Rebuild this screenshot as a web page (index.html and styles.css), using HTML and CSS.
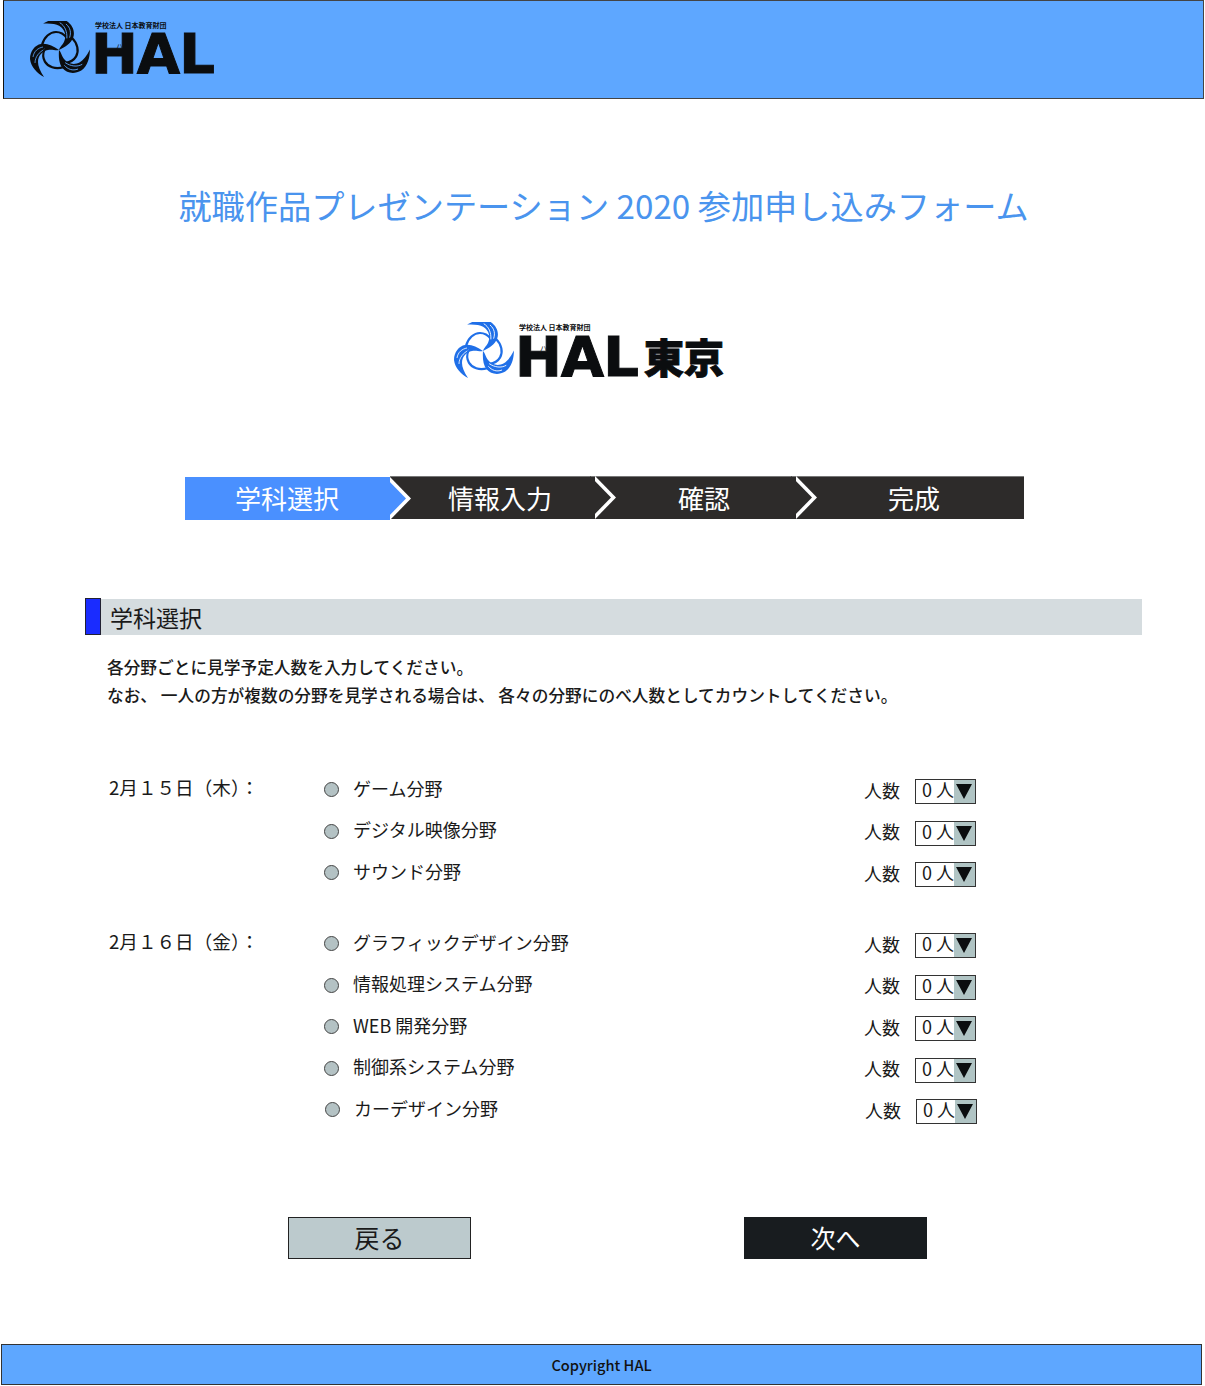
FILE: index.html
```html
<!DOCTYPE html>
<html lang="ja">
<head>
  <meta charset="UTF-8">
  <meta name="viewport" content="width=device-width, initial-scale=1.0">
  <title>就職作品プレゼンテーション 2020 参加申し込みフォーム</title>
  <link rel="stylesheet" href="styles.css">
</head>
<body>
  <svg class="defs" width="0" height="0">
    <symbol id="mark" viewBox="0 0 60 60">
      <g id="blade">
        <path d="M29 29 C23 25 17 22 11 23 C5 24 0 30 0 38 C1 46 7 52 14 56 C10 50 8 45 8 41 C8 35 12 30 18 29 C22 28 26 30 29 29 Z"/>
        <path class="arc" d="M12 24 C14 16 20 11 26 11 C30 11 34 13 37 17"/>
        <path class="cut" d="M3 36 C4 30 8 27 13 26 M5 42 C5 36 9 31 15 28"/>
      </g>
      <use href="#blade" transform="rotate(120 29 29)"/>
      <use href="#blade" transform="rotate(240 29 29)"/>
    </symbol>
  </svg>

  <header class="top-bar">
    <div class="logo">
      <svg class="logo-mark"><use href="#mark"/></svg>
      <div class="logo-type">
        <span class="logo-small">学校法人 日本教育財団</span>
        <span class="logo-name">HAL<span class="kana kana-ha">ハ</span><span class="kana kana-ru">ル</span></span>
      </div>
    </div>
  </header>

  <h1 class="page-title">就職作品プレゼンテーション 2020 参加申し込みフォーム</h1>

  <div class="logo tokyo-logo">
    <svg class="logo-mark blue"><use href="#mark"/></svg>
    <div class="logo-type">
      <span class="logo-small">学校法人 日本教育財団</span>
      <span class="logo-name">HAL<span class="kana kana-ha">ハ</span><span class="kana kana-ru">ル</span><span class="logo-city">東京</span></span>
    </div>
  </div>

  <ol class="steps">
    <li class="step active">学科選択</li>
    <li class="step">情報入力</li>
    <li class="step">確認</li>
    <li class="step">完成</li>
  </ol>

  <h2 class="section-title">学科選択</h2>
  <p class="intro">各分野ごとに見学予定人数を入力してください。<br>なお、 一人の方が複数の分野を見学される場合は、 各々の分野にのべ人数としてカウントしてください。</p>

  <section class="day">
    <div class="day-label">2月１５日（木）：</div>
    <div class="day-rows">
      <div class="row"><span class="radio"></span><span class="name">ゲーム分野</span><span class="count-label">人数</span><span class="picker"><span class="picker-value">0 人</span><span class="picker-arrow"></span></span></div>
      <div class="row"><span class="radio"></span><span class="name">デジタル映像分野</span><span class="count-label">人数</span><span class="picker"><span class="picker-value">0 人</span><span class="picker-arrow"></span></span></div>
      <div class="row"><span class="radio"></span><span class="name">サウンド分野</span><span class="count-label">人数</span><span class="picker"><span class="picker-value">0 人</span><span class="picker-arrow"></span></span></div>
    </div>
  </section>

  <section class="day">
    <div class="day-label">2月１６日（金）：</div>
    <div class="day-rows">
      <div class="row"><span class="radio"></span><span class="name">グラフィックデザイン分野</span><span class="count-label">人数</span><span class="picker"><span class="picker-value">0 人</span><span class="picker-arrow"></span></span></div>
      <div class="row"><span class="radio"></span><span class="name">情報処理システム分野</span><span class="count-label">人数</span><span class="picker"><span class="picker-value">0 人</span><span class="picker-arrow"></span></span></div>
      <div class="row"><span class="radio"></span><span class="name">WEB 開発分野</span><span class="count-label">人数</span><span class="picker"><span class="picker-value">0 人</span><span class="picker-arrow"></span></span></div>
      <div class="row"><span class="radio"></span><span class="name">制御系システム分野</span><span class="count-label">人数</span><span class="picker"><span class="picker-value">0 人</span><span class="picker-arrow"></span></span></div>
      <div class="row last"><span class="radio"></span><span class="name">カーデザイン分野</span><span class="count-label">人数</span><span class="picker"><span class="picker-value">0 人</span><span class="picker-arrow"></span></span></div>
    </div>
  </section>

  <div class="buttons">
    <button class="btn back">戻る</button>
    <button class="btn next">次へ</button>
  </div>

  <footer class="bottom-bar">Copyright HAL</footer>
</body>
</html>
```

FILE: styles.css
```css
* {
  box-sizing: border-box;
}

body {
  margin: 0;
  height: 1386px;
  overflow: hidden;
  background: #fff;
  color: #1a1a1a;
  font-family: "Noto Sans CJK JP", "Noto Sans", sans-serif;
}

.defs {
  display: block;
  height: 0;
}

.top-bar {
  height: 99px;
  margin-left: 3px;
  margin-right: 1px;
  padding: 20px 0 0 26px;
  background: #5ea7ff;
  border: 1px solid #444;
  border-left-color: #111;
  --cut: #5ea7ff;
}

.logo {
  display: flex;
  align-items: flex-start;
  gap: 5px;
}

.logo-mark {
  flex: none;
  width: 60px;
  height: 60px;
  color: #0b0d0f;
  fill: currentColor;
}

.logo-mark.blue {
  color: #1f6fe8;
  --cut: #fff;
}

.arc {
  fill: none;
  stroke: currentColor;
  stroke-width: 2.2;
}

.cut {
  fill: none;
  stroke: var(--cut);
  stroke-width: 0.8;
}

.logo-type {
  display: flex;
  flex-direction: column;
  color: #0b0d0f;
}

.tokyo-logo .logo-type {
  margin-top: 1px;
}

.logo-small {
  font-size: 7px;
  line-height: 9px;
  font-weight: 700;
}

.logo-name {
  position: relative;
  display: block;
  margin: 2px 0 0 -4px;
  font-family: "DejaVu Sans", sans-serif;
  font-size: 56px;
  line-height: 44px;
  font-weight: 700;
  letter-spacing: -1px;
  white-space: nowrap;
  -webkit-text-stroke: 1px currentColor;
}

.kana {
  position: absolute;
  top: 10px;
  font-family: "Noto Sans CJK JP", sans-serif;
  font-size: 7px;
  line-height: 9px;
  font-weight: 400;
  letter-spacing: 0;
  -webkit-text-stroke: 0;
}

.kana-ha {
  left: 25px;
}

.kana-ru {
  top: 17px;
  left: 95px;
}

.logo-city {
  margin-left: 6px;
  vertical-align: 3px;
  font-family: "Noto Sans CJK JP", sans-serif;
  font-size: 40px;
  font-weight: 900;
  letter-spacing: 0;
}

.page-title {
  margin: 81px 0 0;
  padding-left: 2px;
  text-align: center;
  color: #4a94ee;
  font-size: 33.2px;
  line-height: 50px;
  font-weight: 400;
  white-space: nowrap;
}

.tokyo-logo {
  margin: 92px 0 0 454px;
}

.steps {
  display: grid;
  grid-template-columns: 205px 205px 201px 228px;
  list-style: none;
  margin: 94px 0 0 185px;
  padding: 0;
  height: 43px;
}

.step {
  position: relative;
  display: flex;
  align-items: center;
  justify-content: center;
  padding-bottom: 2px;
  background: #2d2b2a;
  border-top: 1px solid #777;
  color: #fff;
  font-size: 26px;
}

.step:nth-child(1) {
  padding-right: 1px;
}

.step:nth-child(2) {
  padding-left: 15px;
}

.step:nth-child(3) {
  padding-left: 17px;
}

.step:nth-child(4) {
  padding-left: 8px;
}

.step.active {
  margin: 1px 0 -1px;
  background: #4a90ff;
  border-top: 0;
}

.step:not(:last-child)::before,
.step:not(:last-child)::after {
  content: "";
  position: absolute;
  top: -1px;
  bottom: 0;
  width: 21px;
  clip-path: polygon(0 0, 100% 50%, 0 100%);
}

.step:not(:last-child)::before {
  z-index: 1;
  left: 100%;
  background: #fff;
}

.step:not(:last-child)::after {
  z-index: 2;
  left: calc(100% - 5px);
  background: #2d2b2a;
}

.step.active::before,
.step.active::after {
  top: 0;
}

.step.active::after {
  background: #4a90ff;
}

.section-title {
  display: flex;
  margin: 80px 63px 0 85px;
  height: 36px;
  background: #d5dcdf;
  font-size: 23px;
  line-height: 36px;
  font-weight: 400;
}

.section-title::before {
  content: "";
  flex: none;
  width: 14px;
  margin: -1px 9px 0 0;
  background: #1a2cff;
  border: 1px solid #223;
}

.intro {
  margin: 18px 0 0 107px;
  font-size: 16.7px;
  line-height: 28px;
  font-weight: 500;
  white-space: nowrap;
}

.day {
  display: flex;
  margin-left: 109px;
}

.intro + .day {
  margin-top: 70px;
}

.day + .day {
  margin-top: 46px;
}

.day-label {
  width: 215px;
  font-size: 18.6px;
  line-height: 15px;
}

.day-rows {
  display: flex;
  flex-direction: column;
  gap: 16.5px;
}

.row {
  display: flex;
  align-items: center;
  height: 25px;
  font-size: 18px;
}

.row.last {
  margin-left: 1px;
}

.radio {
  width: 15px;
  height: 15px;
  margin: 0 14px 4px 0;
  border: 1px solid #444;
  border-radius: 50%;
  background: #b4c2c4;
}

.name {
  width: 511px;
  margin-bottom: 8px;
}

.count-label {
  width: 51px;
  margin-bottom: 4px;
}

.picker {
  display: flex;
  width: 61px;
  height: 25px;
  border: 1px solid #333;
}

.picker-value {
  flex: 1;
  padding-left: 6px;
  line-height: 19px;
  white-space: nowrap;
}

.picker-arrow {
  position: relative;
  width: 21px;
  background: #b0c4c4;
}

.picker-arrow::after {
  content: "";
  position: absolute;
  top: 4px;
  left: 2px;
  border-left: 8px solid transparent;
  border-right: 8px solid transparent;
  border-top: 15px solid #0b0d0f;
}

.buttons {
  display: flex;
  gap: 273px;
  margin: 93px 0 0 288px;
}

.btn {
  width: 183px;
  height: 42px;
  padding: 0 0 3px;
  font-family: inherit;
  font-size: 25px;
  border-radius: 0;
}

.back {
  background: #bccacd;
  border: 1px solid #222;
  color: #1a1a1a;
}

.next {
  background: #181c1f;
  border: 1px solid #181c1f;
  color: #fff;
}

.bottom-bar {
  height: 41px;
  margin: 85px 3px 0 1px;
  background: #5ea7ff;
  border: 1px solid #333;
  text-align: center;
  font-size: 14.6px;
  line-height: 39px;
  font-weight: 500;
  color: #111;
}
```
